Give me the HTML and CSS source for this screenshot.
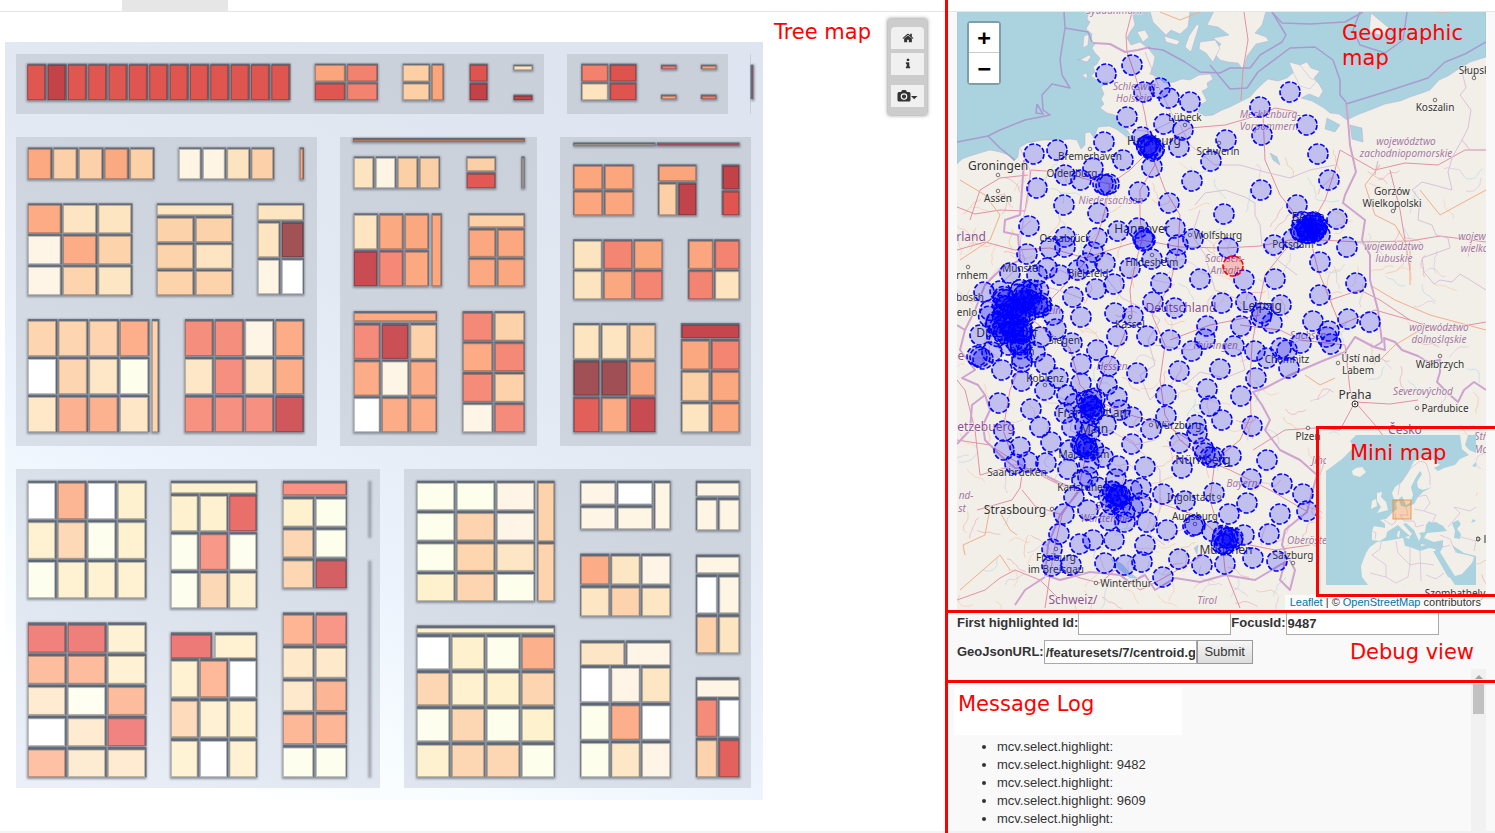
FILE: index.html
```
<!DOCTYPE html>
<html lang="en">
<head>
<meta charset="utf-8">
<title>Multiple coordinated views</title>
<link rel="stylesheet" href="styles.css">
</head>
<body>
<div class="layout">
  <section class="pane tree-pane">
    <div class="strip"><span class="strip-tab"></span></div>
    <div class="tree-body">
      <svg id="treemap" class="drawing" viewBox="0 12 945 819" role="img" aria-label="Tree map"></svg>
      <h2 class="callout callout-tree">Tree map</h2>
      <div class="toolbar">
        <button class="tool tool-first" type="button" aria-label="Home"><svg class="icon" viewBox="0 0 1792 1792"><path d="M1472 992v480q0 26-19 45t-45 19h-384v-384h-256v384h-384q-26 0-45-19t-19-45v-480q0-1 .5-3t.5-3l575-474 575 474q1 2 1 6zm223-69l-62 74q-8 9-21 11h-3q-13 0-21-7l-692-577-692 577q-12 8-24 7-13-2-21-11l-62-74q-8-10-7-23.500t11-21.500l719-599q32-26 76-26t76 26l244 204v-195q0-14 9-23t23-9h192q14 0 23 9t9 23v408l219 182q10 8 11 21.500t-7 23.500z"/></svg></button>
        <button class="tool" type="button" aria-label="Information"><svg class="icon" viewBox="0 0 1792 1792"><path d="M1216 1344v128q0 26-19 45t-45 19h-512q-26 0-45-19t-19-45v-128q0-26 19-45t45-19h64v-384h-64q-26 0-45-19t-19-45v-128q0-26 19-45t45-19h384q26 0 45 19t19 45v576h64q26 0 45 19t19 45zm-128-1152v192q0 26-19 45t-45 19h-256q-26 0-45-19t-19-45v-192q0-26 19-45t45-19h256q26 0 45 19t19 45z"/></svg></button>
        <button class="tool tool-camera" type="button" aria-label="Take a snapshot"><svg class="icon icon-camera" viewBox="0 0 20 12"><path fill-rule="evenodd" d="M1.500 2H3.500L4.300.5Q4.600 0 5.200 0H7.800Q8.400 0 8.700.5L9.500 2H11.500Q13 2 13 3.500V10Q13 11.500 11.500 11.500H1.500Q0 11.500 0 10V3.500Q0 2 1.500 2ZM6.500 3.300A3.300 3.300 0 1 0 6.500 9.900A3.300 3.300 0 1 0 6.500 3.300ZM6.500 4.500A2.100 2.100 0 1 1 6.500 8.700A2.100 2.100 0 1 1 6.500 4.500ZM13.500 6H20L16.700 9.300Z"/></svg></button>
      </div>
    </div>
  </section>
  <section class="pane side-pane">
    <div class="strip"></div>
    <div class="map-body">
      <svg id="geomap" class="drawing" viewBox="957 12 529 598" role="img" aria-label="Geographic map"></svg>
      <div class="zoomer">
        <button class="zoom-button" type="button" aria-label="Zoom in">+</button>
        <button class="zoom-button" type="button" aria-label="Zoom out">−</button>
      </div>
      <h2 class="callout callout-geo">Geographic<br>map</h2>
      <div class="attribution"><a href="#leaflet">Leaflet</a> | © <a href="#osm">OpenStreetMap</a> contributors</div>
    </div>
    <div class="mini-frame">
      <svg id="minimap" class="mini" viewBox="0 0 150 150" role="img" aria-label="Mini map"></svg>
      <h2 class="callout callout-mini">Mini map</h2>
    </div>
    <form class="debug">
      <div class="field-row">
        <label for="first">First highlighted Id:</label><input id="first" type="text"><label for="focus">FocusId:</label><input id="focus" type="text" value="9487">
      </div>
      <div class="field-row">
        <label for="url">GeoJsonURL:</label><input id="url" type="text" value="/featuresets/7/centroid.geojson"><button class="submit" type="button">Submit</button>
      </div>
      <h2 class="callout callout-debug">Debug view</h2>
    </form>
    <div class="log">
      <div class="log-main">
        <div class="log-title"><h2>Message Log</h2></div>
        <ul class="messages">
          <li>mcv.select.highlight:</li>
          <li>mcv.select.highlight: 9482</li>
          <li>mcv.select.highlight:</li>
          <li>mcv.select.highlight: 9609</li>
          <li>mcv.select.highlight:</li>
        </ul>
      </div>
      <div class="scrollbar"><span class="scroll-arrow"></span><span class="scroll-thumb"></span></div>
    </div>
  </section>
</div>
<script src="script.js"></script>
</body>
</html>
```
FILE: styles.css
```
* { box-sizing: border-box; }
body {
  margin: 0;
  background: #fff;
  color: #333;
  font: 13px/18px "Liberation Sans", Arial, sans-serif;
}
h2 { margin: 0; font-weight: 400; }
.layout {
  display: grid;
  grid-template-columns: 945fr 550fr;
  min-height: 100vh;
  overflow: hidden;
}
.pane { min-width: 0; }
.tree-pane { border-bottom: 2px solid #f4f4f4; }
.side-pane {
  position: relative;
  display: flex;
  flex-direction: column;
  background: linear-gradient(#f1f1f1, #f1f1f1) bottom / 100% 2px no-repeat #f9f9f9;
  border-left: 3px solid #f00;
}
.strip {
  display: flex;
  height: 12px;
  background: #fff;
  border-bottom: 1px solid #e6e6e6;
}
.strip-tab { width: 106px; margin-left: 122px; background: #e6e6e6; }
.drawing { display: block; width: 100%; height: auto; }
.tree-body, .map-body { position: relative; }
.map-body { margin: 0 9px; }

.callout, .log-title h2 {
  color: #f00;
  font: 21px/25px "DejaVu Sans", sans-serif;
}
.callout { position: absolute; white-space: nowrap; }
.callout-tree { top: 8px; right: 74px; }
.callout-geo { top: 9px; right: 23px; }
.callout-mini { top: 12px; left: 31px; }
.callout-debug { top: 30px; right: 21px; }

.toolbar {
  position: absolute;
  top: 7px;
  right: 18px;
  display: flex;
  flex-direction: column;
  gap: 4px;
  width: 39px;
  padding: 8px 3px;
  background: #ccc;
  box-shadow: 0 0 4px #777;
}
.tool {
  display: flex;
  align-items: center;
  justify-content: center;
  height: 22px;
  padding: 0;
  border: 0;
  background: #f0f0f0;
}
.tool-first { border-radius: 4px 4px 0 0; }
.tool-camera { margin-top: 6px; }
.icon { width: 12px; height: 12px; fill: #333; }
.icon-camera { width: 21px; height: 12px; }

.zoomer {
  position: absolute;
  top: 9px;
  left: 10px;
  display: flex;
  flex-direction: column;
  width: 34px;
  border: 2px solid rgba(0, 0, 0, 0.25);
  border-radius: 4px;
  background-clip: padding-box;
}
.zoom-button {
  height: 30px;
  padding: 0;
  border: 0;
  background: #fff;
  color: #000;
  font: bold 22px/29px "DejaVu Sans Mono", monospace;
}
.zoom-button:first-child { border-bottom: 1px solid #ccc; }
.attribution {
  position: absolute;
  right: 0;
  bottom: 0;
  padding: 0 5px;
  background: rgba(255, 255, 255, 0.7);
  font-size: 11px;
  line-height: 15px;
}
.attribution a { color: #0078a8; text-decoration: none; }
.mini-frame {
  position: absolute;
  top: 426px;
  right: 0;
  width: 179px;
  height: 171px;
  padding: 6px 7px;
  border: 3px solid #f00;
  border-right: 0;
}
.mini { display: block; width: 150px; height: 150px; background: #aad3df; }

.map-text { font-family: "Noto Sans", sans-serif; fill: #333; text-anchor: middle; paint-order: stroke; stroke: #f7f4ef; stroke-width: 1px; }
.map-region { fill: #a277a0; font-style: italic; }
.map-country { fill: #8b5391; }

.debug {
  position: relative;
  display: flex;
  flex-direction: column;
  gap: 5px;
  height: 59px;
  padding: 1px 9px 0;
  font-weight: bold;
}
.debug::before, .log::before {
  content: "";
  position: absolute;
  top: 0;
  left: 0;
  right: 0;
  height: 3px;
  background: #f00;
}
.field-row { display: flex; align-items: center; height: 24px; white-space: nowrap; }
.field-row input {
  width: 153px;
  height: 24px;
  padding: 1px;
  border: 1px solid #a9a9a9;
  background: #fff;
  color: #333;
  font: bold 13px/18px "Liberation Sans", Arial, sans-serif;
}
.submit {
  width: 56px;
  height: 24px;
  padding: 0;
  border: 1px solid #999;
  background: linear-gradient(#f6f6f6, #dcdcdc);
  color: #333;
  font: 13px/18px "Liberation Sans", Arial, sans-serif;
}
.log { position: relative; display: flex; flex: 1; padding-right: 9px; }
.log::before { top: 11px; }
.log-main { flex: 1; padding: 18px 6px 0; }
.log-title { width: 228px; height: 48px; padding: 5px 4px; background: #fff; }
.messages { margin: 3px 0 0; padding-left: 43px; }
.scrollbar { display: flex; flex-direction: column; align-items: center; width: 15px; background: #f1f1f1; }
.scroll-arrow { margin: 6px 0 5px; border: 4px solid transparent; border-top: 0; border-bottom-color: #a3a3a3; }
.scroll-thumb { width: 11px; height: 30px; background: #c1c1c1; }
```
FILE: script.js
```
const NS = "http://www.w3.org/2000/svg";
function add(parent, tag, attrs, text) {
  const el = document.createElementNS(NS, tag);
  for (const key in attrs) el.setAttribute(key, attrs[key]);
  if (text) el.textContent = text;
  parent.appendChild(el);
  return el;
}
function pairs(text) {
  return text.trim().split(/\s+/).map(p => p.split(",").map(Number));
}

/* ---------- tree map ---------- */
const tree = document.getElementById("treemap");
const defs = add(tree, "defs", {});
function gradient(id, x1, y1, x2, y2, stops) {
  const g = add(defs, "linearGradient", { id, gradientUnits: "userSpaceOnUse", x1, y1, x2, y2 });
  stops.forEach(([offset, color]) => add(g, "stop", { offset, "stop-color": color }));
}
gradient("plate", 520, 60, 160, 760, [[0, "#dfe5f0"], [0.35, "#e3e9f3"], [0.65, "#ebf2fc"], [0.85, "#f6fcff"], [1, "#ffffff"]]);
gradient("district", 520, 60, 100, 800, [[0, "#cad0da"], [0.4, "#cfd5de"], [0.7, "#dae0e9"], [1, "#eaeff8"]]);
const blur = add(defs, "filter", { id: "soft", x: "-50%", y: "-50%", width: "200%", height: "200%" });
add(blur, "feGaussianBlur", { stdDeviation: 1.2 });

add(tree, "rect", { x: 5, y: 42, width: 758, height: 758, fill: "url(#plate)" });
[[16, 54, 544, 114], [567, 54, 728, 114], [750, 54, 751, 114], [16, 137, 317, 446], [340, 137, 537, 446],
 [560, 137, 751, 446], [16, 469, 380, 788], [404, 469, 751, 788]].forEach(([a, b, c, d]) =>
  add(tree, "rect", { x: a, y: b, width: c - a, height: d - b, fill: "url(#district)" }));

const palette = {
  R: [222, 81, 76], D: [191, 62, 68], M: [146, 67, 72], S: [243, 127, 108], O: [251, 163, 121],
  P: [252, 206, 163], C: [253, 227, 189], I: [254, 244, 227], W: [255, 255, 255],
  Y: [254, 238, 197], L: [254, 254, 234], B: [172, 112, 82], T: [178, 154, 128], G: [139, 145, 155]
};
const shadows = add(tree, "g", { fill: "#68717f", opacity: 0.72, filter: "url(#soft)" });
const sides = add(tree, "g", {});
const faces = add(tree, "g", {});

/* Each block: left, top, right, bottom, rows of tile codes. */
const blocks = [
  [27.5, 65, 289, 100, "RDRRRRRRRRRRR"], [315, 65, 377, 100, "OS/RS"], [403, 65, 429, 100, "P/P"], [432, 65, 443, 100, "O"],
  [470, 65, 487, 100, "R/D"], [514, 66, 532, 70, "C"], [514, 96, 532, 100, "D"], [582, 65, 636, 100, "SR/CR"],
  [662, 66, 676, 69, "S"], [702, 66, 716, 69, "O"], [662, 96, 676, 99, "O"], [702, 96, 716, 99, "S"], [752, 66, 753, 99, "D"],
  [28, 149, 153, 179, "OPPOP"], [179, 149, 273, 179, "IICP"], [300, 149, 303, 179, "O"],
  [28, 205, 131, 295, "OCC/IOP/IPC"], [157, 205, 232, 215, "C"], [157, 218, 232, 295, "PP/PC/PP"],
  [258, 205, 303, 220, "C"], [258, 223, 303, 294, "CM/IW"],
  [28, 321, 148, 432, "PPPO/WPCL/COOC"], [152, 321, 158, 432, "P"], [185, 321, 303, 432, "SSIO/CSCO/SSSD"],
  [353, 139.500, 524, 141.500, "B"], [354, 158, 439, 188, "CIPP"], [467, 158, 495, 171, "P"], [467, 174, 495, 188, "R"], [522, 158, 524, 188, "T"],
  [354, 215, 428, 286, "COO/DSO"], [432, 215, 441, 286, "O"], [469, 215, 524, 227, "P"], [469, 230, 524, 286, "OO/OO"],
  [354, 313, 436, 321, "O"], [354, 325, 436, 432, "SDP/OIO/WOO"], [463, 313, 524, 432, "SP/OS/SP/IS"],
  [574, 144, 655, 145.500, "T"], [658, 144, 739, 145.500, "D"], [574, 166, 633, 215, "OO/OO"], [659, 166, 696, 181, "O"],
  [659, 184, 696, 215, "PD"], [723, 166, 739, 215, "D/R"], [574, 241, 662, 299, "CSO/COS"], [689, 241, 739, 299, "OS/SC"],
  [574, 325, 655, 432, "CCP/MMO/ROD"], [682, 325, 739, 338, "D"], [682, 341, 739, 432, "OS/PO/CO"],
  [28, 483, 145, 598, "WOWY/YPLY/LYYY"], [171, 483, 256, 493, "Y"], [171, 496, 256, 608, "YYR/LSL/LPY"],
  [283, 483, 346, 495, "S"], [283, 499, 346, 588, "YL/PL/PD"], [369, 483, 370, 536, "G"],
  [28, 625, 145, 777, "RRY/OOY/CLO/WCR/OCC"], [171, 635, 211, 658, "R"], [215, 635, 256, 658, "Y"], [171, 661, 256, 777, "YOW/PYY/YWY"],
  [283, 615, 346, 777, "OS/CC/CO/OO/LL"], [369, 563, 370, 776, "G"],
  [417, 483, 534, 601, "LLI/LPI/LPC/YPL"], [538, 483, 554, 541, "P"], [538, 544, 554, 601, "P"],
  [417, 628, 554, 633, "Y"], [417, 637, 554, 777, "WYLO/PYYP/LPLY/YPPL"],
  [581, 483, 652, 529, "IW/II"], [655, 483, 670, 529, "I"], [697, 483, 739, 496, "I"], [697, 500, 739, 530, "II"],
  [581, 556, 670, 616, "OCI/CPC"], [697, 557, 739, 573, "I"], [697, 577, 739, 653, "WI/PC"],
  [581, 643, 670, 665, "CI"], [581, 668, 670, 777, "WIC/LOW/LCI"], [697, 680, 739, 697, "I"], [697, 700, 739, 777, "SW/PR"]
];
blocks.forEach(([x0, y0, x1, y1, spec]) => {
  const depth = 1.2 + y0 / 450;
  const lean = Math.max(0.4, 1.6 - x0 / 500);
  const left = x0 > 380 ? (x0 - 380) / 250 : 0;
  const faint = spec === "G";
  add(shadows, "rect", { x: x0 - 1, y: y0 - depth, width: x1 - x0 + 2.500, height: y1 - y0 + depth + 2, opacity: faint ? 0.7 : 1 });
  const rows = spec.split("/");
  const gapX = 3, gapY = 2.400 + y0 / 400;
  const h = (y1 - y0 - gapY * (rows.length - 1)) / rows.length;
  rows.forEach((row, j) => {
    const w = (x1 - x0 - gapX * (row.length - 1)) / row.length;
    [...row].forEach((code, i) => {
      const x = x0 + i * (w + gapX), y = y0 + j * (h + gapY);
      const light = 0.36 * (y / 800) * (1 - 0.75 * x / 760);
      const rgb = palette[code].map((v, n) => Math.round(v + (255 - v) * (n ? light : Math.min(1, light * 2))));
      const rim = rgb.map(v => Math.round(v * 0.74));
      if (!faint) add(sides, "rect", { x: x - left, y: y - depth, width: w + lean + left, height: h + depth, fill: "#535d6b", opacity: 0.8 });
      const thin = w < 3 || h < 3;
      add(faces, "rect", { x: x + 0.300, y: y + 0.300, width: w - 0.600, height: h - 0.600, fill: `rgb(${rgb})`,
        stroke: `rgb(${rim})`, "stroke-width": thin ? 0 : 0.8 });
    });
  });
});

/* ---------- geographic map ---------- */
const geo = document.getElementById("geomap");
const sea = "#aad3df", land = "#f2efe9";
add(geo, "rect", { x: 957, y: 12, width: 529, height: 598, fill: land });
function area(points, fill) { return add(geo, "polygon", { points, fill, stroke: "#b7a5cf", "stroke-width": 0.4 }); }
function line(points, stroke, width, opacity) {
  add(geo, "polyline", { points, fill: "none", stroke, "stroke-width": width, opacity: opacity || 1, "stroke-linejoin": "round" });
}
area("957,11 1089,11 1087,19 1090,22 1086,29 1092,34 1091,40 1095,44 1092,48 1095,53 1100,58 1097,64 1093,67 1095,72 1091,76 1099,82 1108,82 1101,87 1104,94 1101,99 1104,104 1100,108 1107,113 1115,115 1118,123 1127,130 1133,139 1138,142 1130,140 1123,134 1116,129 1109,126 1098,127 1094,138 1090,132 1085,133 1085,145 1081,149 1077,140 1070,139 1060,140 1043,140 1027,143 1019,148 1018,157 1014,161 1008,155 1000,152 990,150 983,152 970,156 962,159 957,164", sea);
area("1132,11 1135,25 1130,32 1127,38 1131,45 1140,42 1149,49 1155,57 1153,66 1150,74 1158,77 1164,83 1174,82 1182,79 1190,80 1199,75 1210,74 1213,79 1207,83 1208,88 1202,91 1207,101 1200,105 1198,112 1205,116 1213,115 1222,110 1230,107 1240,102 1250,97 1258,88 1268,79 1278,81 1287,78 1296,70 1300,65 1307,62 1311,68 1320,71 1314,78 1319,84 1323,91 1319,98 1309,94 1301,98 1312,101 1324,108 1330,113 1339,114 1347,120 1357,115 1370,110 1385,104 1400,101 1410,97 1422,93 1430,90 1439,80 1448,76 1457,70 1470,62 1486,57 1486,11", sea);
["1150,11 1190,11 1188,27 1180,34 1171,30 1166,35 1158,27 1153,22", "1214,11 1266,11 1262,25 1255,33 1266,37 1269,41 1256,44 1247,56 1243,70 1238,63 1228,62 1220,60 1214,53 1221,44 1213,38 1229,35 1218,27 1207,25",
 "1197,24 1199,26 1191,52 1185,47 1189,36", "1164,36 1180,41 1177,45 1166,42", "1200,42 1215,40 1220,48 1213,62 1206,53 1199,49", "1371,13 1389,28 1384,36 1369,32",
 "1137,32 1145,30 1149,37 1143,42", "1289,62 1300,65 1310,78 1317,81 1310,89 1300,86 1294,74", "1084,36 1089,34 1088,45 1083,48", "1080,60 1089,55 1091,57 1087,62 1077,59", "1082,75 1087,73 1087,79"].forEach(p => area(p, land));
["1327,118 1340,125 1335,132 1325,129", "1350,125 1362,128 1363,142 1352,139", "1270,153 1277,157 1280,165 1273,160", "1376,168 1378,161 1375,175", "1111,559 1122,564 1130,573 1137,578 1130,578 1119,569", "1194,548 1198,545 1197,554"].forEach(p => area(p, sea));

/* minor roads, laid out with a fixed seed */
let seed = 77;
function rnd() { seed = (seed * 16807) % 2147483647; return seed / 2147483647; }
for (let i = 0; i < 300; i++) {
  let x = 957 + rnd() * 525, y = 170 + rnd() * 435, a = rnd() * 6.28;
  const pts = [];
  for (let k = 0; k < 7; k++) {
    pts.push(x.toFixed(1) + "," + y.toFixed(1));
    a += (rnd() - 0.5) * 1.600;
    x += Math.cos(a) * 4; y += Math.sin(a) * 4;
  }
  line(pts.join(" "), ["#f5b896", "#efa0ad", "#f7c6ac", "#d7bfdc", "#b5d5e0"][i % 5], 0.8, 0.75);
}
/* main roads */
["1132,12 1126,35 1127,52 1135,75 1140,92 1145,115 1150,145 1155,165 1140,190 1140,215 1142,240 1135,265 1130,290 1132,315 1120,345 1105,370 1095,400 1088,425 1085,460 1078,490 1062,515 1055,545 1050,575 1045,608",
 "957,207 975,214 1000,210 1025,211 1031,170 1060,172 1090,180 1110,184 1130,170 1150,150 1190,128 1225,125 1260,115 1275,108 1297,112",
 "957,250 985,242 1015,250 1050,248 1085,258 1110,250 1142,240 1180,247 1225,248 1260,246 1290,240 1320,240 1360,242 1410,241 1440,236 1486,242",
 "1150,150 1165,190 1180,215 1178,250 1170,285 1152,315 1165,345 1160,380 1165,415 1180,440 1205,460 1230,470 1270,490 1308,512",
 "1308,230 1285,250 1265,275 1258,310 1252,345 1250,380 1251,415 1240,440 1215,460 1210,500 1222,540 1225,570 1240,608",
 "1308,230 1318,270 1330,300 1340,325 1375,310 1410,320 1440,330 1486,322", "1308,230 1325,200 1335,170 1340,150 1375,170 1405,163 1438,165 1465,150 1486,150",
 "957,300 990,302 1020,310 1045,330 1070,348 1080,385 1095,400 1130,415 1165,425 1205,450", "1240,325 1280,330 1300,340 1345,345 1350,390 1355,402 1340,430 1315,428 1285,430 1253,450",
 "1355,402 1390,404 1418,400", "1355,402 1375,425 1390,445", "957,440 990,445 1005,455 1030,470 1060,485 1075,490 1105,490 1150,500 1195,515 1225,540 1275,550 1310,545",
 "977,510 1012,500 1020,488 1022,475 1005,468 980,475 975,430 965,390 957,380", "1062,515 1035,506 1022,490", "1170,340 1210,325 1260,315", "1020,365 1010,390 1003,430 1010,450",
 "957,600 985,590 1000,578 1015,570 1040,580 1060,600", "1060,570 1080,578 1100,583 1115,570 1140,590 1160,580 1195,560 1225,540", "1330,300 1360,290 1380,300 1410,320", "1263,115 1265,160 1280,195 1308,230",
 "1110,184 1105,210 1098,235 1085,262 1060,290 1040,310", "1241,100 1243,70 1248,40 1244,12", "970,220 980,190 1000,178 1028,175", "1390,170 1400,210 1405,240 1410,270"].forEach(p => line(p, "#e391a4", 1));
["960,180 985,195 1000,215 990,240 960,260", "1380,165 1365,185 1375,215 1395,225 1410,250 1410,285", "990,508 985,535 963,545 965,555", "1000,512 1010,530 1017,535", "1370,285 1395,300 1430,315 1486,330", "1305,375 1320,385 1335,378", "1380,360 1395,345 1420,330", "1160,12 1180,20 1200,12", "1420,190 1440,215 1486,190", "1435,12 1450,12", "960,590 1000,555 1010,570"].forEach(p => line(p, "#f3ae87", 1));
/* state borders */
["1145,52 1160,90 1175,120 1150,132 1125,128", "1020,148 1030,170 1028,200 1024,215 1020,245 1025,260 1005,280", "1195,205 1205,193 1225,190 1245,197 1255,203 1255,215 1260,225 1262,245 1280,262 1297,275",
 "1085,300 1065,292 1040,285 1060,270 1080,280 1100,270 1122,298 1150,312 1160,320 1148,340 1155,365 1140,375 1150,400 1165,385", "1180,125 1190,145 1215,165 1240,165 1265,172 1290,178 1310,170 1335,165",
 "1200,210 1192,235 1205,255 1215,290 1235,298 1250,310", "1155,345 1190,350 1215,345 1240,350 1245,370 1225,378 1200,372 1185,385", "1055,395 1075,405 1070,430 1090,440 1110,430 1135,445 1155,440", "1135,446 1160,470 1160,510 1150,535 1165,545",
 "1422,182 1412,190 1420,200 1418,220 1432,225 1436,235 1448,238 1450,248 1422,258 1424,272 1434,284 1440,280 1452,282 1460,274 1470,280 1486,290",
 "1345,440 1325,460 1320,475", "1290,345 1320,330 1345,325", "1462,72 1466,88 1460,95 1471,110 1468,128 1462,140 1470,150 1486,150", "1462,140 1452,158 1448,172 1452,190 1430,184 1422,182"].forEach(p => line(p, "#d5bcd9", 0.9));
/* country borders */
["1093,43 1110,44 1125,52 1138,50 1150,47", "1346,102 1348,120 1350,145 1356,172 1345,195 1343,203 1365,220 1362,240 1370,255 1370,280 1378,310 1382,342 1374,347 1355,337 1345,352 1320,362 1290,375 1265,388 1253,392 1262,405 1270,420 1265,430 1280,450 1300,460 1317,475 1310,500 1307,512 1285,530 1282,545 1295,570 1290,590 1280,580 1285,562 1255,580 1225,575 1200,582 1175,578 1155,590 1145,575 1130,583 1120,575 1090,572 1060,580 1045,575 1048,545 1060,515 1080,490 1060,483 1035,470 1015,468 1000,455 985,440 983,425 990,410 985,395 978,385 962,378 975,370 960,350 965,330 957,325",
 "1024,160 1022,190 1020,215 1005,220 1004,232 1018,235 1020,260 1000,270 985,285 975,310 965,330", "1374,347 1385,350 1384,338 1395,342 1402,350 1418,356 1428,362 1440,360 1440,372 1437,382 1450,395 1458,402 1464,390 1474,382 1486,390", "985,395 972,405 970,430 957,444", "1045,577 1025,590 1015,605"].forEach(p => line(p, "#cfa3cf", 2));
["1064,12 1065,28 1060,60 1062,75 1070,88 1052,84 1042,95 1043,110 1050,115 1025,120 1000,130 988,136 957,142", "988,136 1000,148 1015,160", "1065,28 1088,32 1092,42", "1148,48 1163,50 1185,62 1200,72 1220,73 1230,68 1250,68 1260,55 1282,42 1286,35 1280,25 1272,12", "1210,65 1230,89 1247,88 1258,72 1290,48 1315,47 1333,60 1340,80 1340,95 1346,102", "1346,104 1385,92 1428,78 1445,62 1465,54 1486,42", "1363,12 1345,22 1310,24 1282,23 1272,12", "1360,12 1353,30 1360,45 1385,53 1403,40 1407,12", "1037,104 1043,114 1036,113 1037,104"].forEach(p => line(p, "#a99bd0", 1.500));

const labels = [
  ["Syddanmark", 1114, 14, 10, "r"], ["Schleswig-", 1136, 90, 10, "r"], ["Holstein", 1134, 102, 10, "r"], ["Mecklenburg-", 1270, 118, 10, "r"], ["Vorpommern", 1269, 130, 10, "r"],
  ["Lübeck", 1185, 121, 10], ["Hamburg", 1154, 145, 12], ["Schwerin", 1218, 155, 10], ["Bremerhaven", 1090, 160, 10], ["Groningen", 998, 170, 12], ["Oldenburg", 1072, 177, 10], ["Assen", 998, 202, 10],
  ["Niedersachsen", 1111, 204, 10, "r"], ["Hannover", 1142, 233, 12], ["Wolfsburg", 1218, 239, 10], ["Osnabrück", 1065, 242, 10], ["rland", 971, 241, 12, "c"], ["Hildesheim", 1152, 266, 10], ["Münster", 1022, 272, 10], ["Bielefeld", 1088, 277, 10], ["rnhem", 972, 279, 10], ["Sachsen-", 1225, 262, 10, "r"], ["Anhalt", 1225, 274, 10, "r"],
  ["Berlin", 1308, 221, 12], ["Potsdam", 1293, 248, 10], ["bosch", 970, 301, 10], ["enlo", 967, 316, 10], ["Deutschland", 1181, 312, 12, "c"], ["Düsseldorf", 1007, 337, 12], ["Siegen", 1064, 344, 10], ["Kassel", 1130, 328, 10], ["Nordrhein-", 1040, 314, 10, "r"], ["e", 961, 360, 12, "c"], ["Bonn", 1022, 355, 10], ["Hessen", 1112, 370, 10, "r"], ["Thüringen", 1215, 349, 10, "r"], ["Leipzig", 1262, 310, 12], ["Sachsen", 1308, 339, 10, "r"], ["Chemnitz", 1287, 363, 10], ["Koblenz", 1045, 382, 10], ["Frankfurt am", 1094, 417, 12], ["Main", 1094, 433, 12], ["etzebuerg", 986, 431, 12, "c"], ["Würzburg", 1178, 429, 10], ["Mannheim", 1084, 458, 10], ["Nürnberg", 1203, 464, 12], ["Saarbrücken", 1017, 476, 10], ["Karlsruhe", 1080, 491, 10], ["Bayern", 1242, 487, 10, "r"], ["Strasbourg", 1015, 514, 12], ["Ingolstadt", 1191, 501, 10], ["Baden-", 1111, 510, 10, "r"], ["Württemberg", 1110, 522, 10, "r"], ["Augsburg", 1195, 520, 10], ["nd-", 966, 499, 10, "r"], ["st", 962, 512, 10, "r"], ["München", 1226, 554, 12], ["Salzburg", 1293, 559, 10], ["Freiburg", 1056, 561, 10], ["im Breisgau", 1056, 573, 10], ["Winterthur", 1126, 587, 10], ["Schweiz/", 1073, 604, 12, "c"], ["Tirol", 1207, 604, 10, "r"], ["Oberöste", 1307, 544, 10, "r"],
  ["Słupsk", 1474, 74, 10], ["Koszalin", 1435, 111, 10], ["województwo", 1406, 145, 10, "r"], ["zachodniopomorskie", 1406, 157, 10, "r"], ["Gorzów", 1392, 195, 10], ["Wielkopolski", 1392, 207, 10], ["województwo", 1394, 250, 10, "r"], ["lubuskie", 1394, 262, 10, "r"], ["województwo", 1488, 240, 10, "r"], ["wielkopolskie", 1490, 252, 10, "r"], ["województwo", 1439, 331, 10, "r"], ["dolnośląskie", 1439, 343, 10, "r"], ["Ústí nad", 1361, 362, 10], ["Labem", 1358, 374, 10], ["Wałbrzych", 1440, 368, 10], ["Praha", 1355, 399, 12], ["Severovýchod", 1423, 395, 10, "r"], ["Pardubice", 1445, 412, 10], ["Plzeň", 1308, 440, 10], ["Česko", 1405, 434, 12, "c"], ["Jiho", 1320, 464, 10, "r"], ["Střední", 1490, 440, 10, "r"], ["Morava", 1491, 453, 10, "r"], ["Szombathely", 1455, 597, 10]
];
labels.forEach(([text, x, y, size, kind]) =>
  add(geo, "text", { x, y, "font-size": size, class: "map-text" + (kind === "r" ? " map-region" : kind === "c" ? " map-country" : "") }, text));
pairs("998,175 998,191 1090,149 1185,125 1219,143 1190,235 1435,100 1474,78 1393,211 1338,363 1440,356 1417,408 1308,428 1130,317 1045,385 1052,509 1151,425 1096,583 1056,549 1219,497 1293,563 968,267 1195,524 1152,255").forEach(([cx, cy]) =>
  add(geo, "circle", { cx, cy, r: 1.800, fill: land, stroke: "#555", "stroke-width": 0.8 }));
add(geo, "circle", { cx: 1355, cy: 404, r: 3, fill: land, stroke: "#333" });
add(geo, "circle", { cx: 1355, cy: 404, r: 1, fill: "#333" });
add(geo, "circle", { cx: 1478, cy: 539, r: 2, fill: land, stroke: "#333" });
add(geo, "circle", { cx: 1478, cy: 539, r: 0.600, fill: "#333" });
line("1485,535 1485,543", "#333", 1);

const markers = pairs(`1106,74 1132,65 1144,92 1160,88 1169,98 1190,102 1127,117 1164,124 1183,130 1104,142 1142,137 1179,147 1034,154 1057,150
1123,160 1152,167 1093,168 1065,175 1081,180 1103,184 1109,184 1106,185 1037,188 1139,192 1192,181 1064,205 1098,213 1169,203 1029,226 1065,237 1050,248
1065,247 1097,238 1118,231 1138,228 1144,241 1143,238 1145,240 1175,228 1193,239 1178,245 1176,259 1152,259 1130,268 1105,263 1093,252 1087,263 1078,270
1060,275 1047,268 1037,275 1027,254 1010,273 984,292 1000,291 1114,284 1096,289 1073,297 1161,283 1153,302 1200,279 1175,308 1290,92 1260,107 1307,125
1262,135 1226,140 1318,154 1329,180 1261,190 1211,161 1224,214 1297,205 1337,219 1274,245 1347,247 1320,262 1228,248 1275,279 1244,280 1356,283 1320,295
1281,305 1222,303 1246,302 1293,239 1320,235 1081,317 1115,313 1133,316 1053,315 1056,329 1072,343 1041,337 1117,336 1147,336 1170,340 1207,326 1205,339
1192,351 1097,350 1081,364 1109,366 1137,373 1179,371 1045,364 1035,352 980,335 992,352 977,356 983,359 980,357 1002,370 1022,362 1022,358 1022,381
1058,378 1045,390 1081,383 1107,385 1117,397 1067,395 1120,410 1132,417 1166,395 1166,416 1207,389 1210,406 1031,409 999,403 1040,427 1004,431 1065,413
1072,427 1106,425 1151,429 1196,425 1197,433 1051,442 1020,447 1004,450 1132,444 1180,443 1203,448 1210,457 1205,453 1046,463 1028,462 1015,464 1070,450
1068,469 1089,464 1118,466 1145,467 1182,468 1103,457 1082,480 1088,477 1097,487 1116,479 1132,490 1141,488 1163,494 1185,501 1214,493 1141,503
1074,497 1064,514 1088,510 1109,520 1125,522 1147,522 1167,530 1059,534 1052,549 1080,544 1093,540 1114,540 1145,545 1105,563 1125,565 1142,562 1163,577
1179,559 1202,565 1193,526 1195,525 1212,531 1052,566 1071,565 1313,321 1348,319 1370,322 1241,326 1261,317 1262,313 1272,323 1329,331 1327,337
1331,344 1301,343 1234,346 1255,351 1281,348 1287,350 1267,358 1289,368 1220,369 1256,378 1241,396 1222,420 1252,426 1231,456 1214,457
1267,460 1251,479 1282,484 1303,494 1307,511 1247,503 1229,514 1280,514 1244,535 1269,534 1225,564 1253,558 1277,561`);
/* Metropolitan clusters: centre, spread, count. */
[[1154, 146, 8, 7, 7], [1308, 227, 10, 8, 19], [1025, 302, 26, 15, 24], [1014, 320, 20, 16, 24], [1018, 342, 10, 8, 6], [992, 326, 12, 22, 7],
 [1085, 405, 15, 8, 8], [1094, 402, 5, 5, 3], [1090, 425, 8, 12, 3], [1088, 449, 12, 10, 7], [1116, 494, 9, 7, 9], [1122, 506, 12, 9, 4], [1225, 540, 6, 6, 6], [1224, 540, 10, 7, 3]]
  .forEach(([cx, cy, rx, ry, n]) => {
    for (let i = 0; i < n; i++) {
      const a = rnd() * 6.283, d = Math.sqrt(rnd());
      markers.push([cx + Math.cos(a) * d * rx, cy + Math.sin(a) * d * ry]);
    }
  });
const dots = add(geo, "g", { fill: "#00f", "fill-opacity": 0.2, stroke: "#00f", "stroke-width": 1.600, "stroke-dasharray": "5 2" });
markers.forEach(([cx, cy]) => add(dots, "circle", { cx: cx.toFixed(1), cy: cy.toFixed(1), r: 10 }));
add(geo, "circle", { cx: 1233, cy: 266, r: 10, fill: "#f00", "fill-opacity": 0.2, stroke: "#f00", "stroke-width": 1.600, "stroke-dasharray": "5 2" });

/* ---------- mini map ---------- */
const mini = document.getElementById("minimap");
["0,0 30,0 24,6 28,12 16,24 8,30 0,36", "26,36 30,33 36,32 40,37 34,42 27,40",
 "102,22 95,23 88,26 82,38 76,47 69,52 66,58 68,64 72,65 76,61 80,70 84,68 87,60 85,52 90,42 94,36 96,39 91,47 92,53 97,55 106,52 97,57 92,62 88,69 80,72 75,71 73,65 70,68 71,74 66,78 60,84 54,85 59,89 59,93 48,91 46,96 46,105 54,106 60,102 61,97 67,93 72,90 76,94 84,101 86,99 77,89 80,88 88,95 93,106 95,101 93,98 99,97 100,90 103,86 108,89 116,90 121,96 112,97 101,98 98,103 108,107 117,105 117,112 114,117 122,130 129,141 136,139 146,128 148,122 141,120 131,118 126,110 138,118 150,121 150,32 146,31 150,27 150,18 143,15 139,10 142,0 134,0 136,14 143,20 134,24 129,30 118,33 112,36 108,33 114,30 108,25",
 "51,107 44,112 40,118 35,131 36,142 42,150 129,150 121,138 111,121 109,114 103,113 94,116 84,112 79,111 77,103 60,106",
 "51,58 56,57 55,62 60,67 62,75 51,78 55,72 51,66", "46,66 50,64 51,71 45,74", "84,101 83,104 79,102", "72,96 74,96 73,103 71,101", "95,109 100,110 95,111"].forEach(points => add(mini, "polygon", { points, fill: land }));
["102,88 110,87 118,92 118,95 108,95 101,95", "126,88 132,85 135,89 131,94 135,99 134,104 128,103 129,96", "150,86 145,88 147,84", "107,116 110,116 121,133 126,143 122,142 114,128"].forEach(points => add(mini, "polygon", { points, fill: sea }));
["58,85 66,90 70,86 69,78", "80,72 82,80 74,80 78,86 88,86 90,92 98,90", "90,62 100,60 104,68 98,76 88,74", "72,60 74,48 84,34 94,26 100,28", "98,76 110,80 106,88", "100,28 104,40 104,50", "70,106 72,118 84,130 94,128 108,130", "55,107 54,114 46,120 60,130 60,142 44,138", "84,112 84,130 82,142 70,148 60,142", "94,116 95,146", "100,140 110,144 118,138", "108,108 118,112 124,110", "114,100 124,104 130,118", "135,102 150,106 148,116", "122,92 134,78 128,72 144,76 150,72", "46,96 50,98 49,104"].forEach(points =>
  add(mini, "polyline", { points, fill: "none", stroke: "#d6b9dc", "stroke-width": 0.7 }));
add(mini, "rect", { x: 67, y: 65, width: 18, height: 19, fill: "#ff7800", "fill-opacity": 0.25, stroke: "#e88a35", "stroke-opacity": 0.8, "stroke-width": 1 });
```
